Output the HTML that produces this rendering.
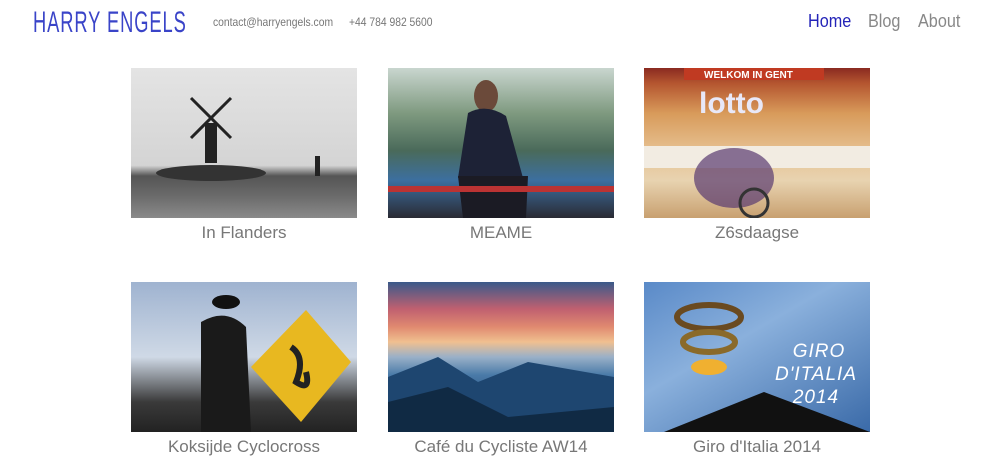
<!DOCTYPE html>
<html><head><meta charset="utf-8"><style>
*{margin:0;padding:0;box-sizing:border-box}
body{width:1000px;height:469px;background:#fff;font-family:"Liberation Sans",sans-serif;position:relative;overflow:hidden}
.t{position:absolute;left:33px;top:6px;font-size:30px;color:#3a44c8;letter-spacing:1.5px;transform:scaleX(0.61);transform-origin:left top;white-space:nowrap}
.c{position:absolute;top:15px;font-size:12px;color:#777;white-space:nowrap;transform:scaleX(0.86);transform-origin:left top}
.n{position:absolute;top:11px;font-size:18px;color:#888;transform:scaleX(0.9);transform-origin:left top}
.im{position:absolute;width:226px;height:150px;overflow:hidden}
.cap{position:absolute;width:226px;text-align:center;font-size:17px;color:#777}
</style></head><body>
<div class="t">HARRY ENGELS</div>
<div class="c" style="left:213px">contact@harryengels.com</div>
<div class="c" style="left:349px">+44 784 982 5600</div>
<div class="n" style="left:808px;color:#2424b8">Home</div>
<div class="n" style="left:868px">Blog</div>
<div class="n" style="left:918px">About</div>

<div class="im" style="left:131px;top:68px;background:linear-gradient(#e4e4e4 0%,#d4d4d4 65%,#555 72%,#6a6a6a 85%,#8a8a8a 100%)">
<svg width="226" height="150"><g stroke="#222" stroke-width="3"><line x1="60" y1="30" x2="100" y2="70"/><line x1="100" y1="30" x2="60" y2="70"/></g><rect x="74" y="55" width="12" height="40" fill="#222"/><ellipse cx="80" cy="105" rx="55" ry="8" fill="#333"/><rect x="184" y="88" width="5" height="20" fill="#222"/></svg></div>
<div class="cap" style="left:131px;top:223px">In Flanders</div>

<div class="im" style="left:388px;top:68px;background:linear-gradient(#c9d6cf 0%,#7f9a80 30%,#4a6a5a 55%,#3c6fa0 75%,#2a2a33 100%)">
<svg width="226" height="150"><ellipse cx="98" cy="28" rx="12" ry="16" fill="#6b4a3a"/><path d="M80 45 Q98 35 118 48 L135 110 L70 110 Z" fill="#1d2236"/><path d="M70 108 L140 108 L138 150 L75 150Z" fill="#1b1b24"/><rect x="0" y="118" width="226" height="6" fill="#b33"/></svg></div>
<div class="cap" style="left:388px;top:223px">MEAME</div>

<div class="im" style="left:644px;top:68px;background:linear-gradient(#8a2a20 0%,#b4552f 10%,#d89a5a 30%,#e6c090 55%,#e8d3b0 75%,#c8a070 100%)">
<svg width="226" height="150"><rect x="40" y="0" width="140" height="12" fill="#c03a22"/><text x="60" y="10" fill="#fff" font-size="10" font-family="Liberation Sans" font-weight="bold">WELKOM IN GENT</text><text x="55" y="45" fill="#e8e8f8" font-size="30" font-weight="bold" font-family="Liberation Sans">lotto</text><rect x="0" y="78" width="226" height="22" fill="#f2ece2"/><ellipse cx="90" cy="110" rx="40" ry="30" fill="#5a3a70" opacity=".7"/><circle cx="110" cy="135" r="14" fill="none" stroke="#333" stroke-width="3"/></svg></div>
<div class="cap" style="left:644px;top:223px">Z6sdaagse</div>

<div class="im" style="left:131px;top:282px;background:linear-gradient(#9fb3d0 0%,#cfd9e6 50%,#3a3a3a 80%,#222 100%)">
<svg width="226" height="150"><ellipse cx="95" cy="20" rx="14" ry="7" fill="#111"/><path d="M70 40 Q95 25 115 45 L120 150 L70 150Z" fill="#1a1a1a"/><path d="M175 28 L220 80 L170 140 L120 85Z" fill="#e8b820"/><path d="M160 65 Q175 75 165 100 Q180 110 175 90" stroke="#222" stroke-width="6" fill="none"/></svg></div>
<div class="cap" style="left:131px;top:437px">Koksijde Cyclocross</div>

<div class="im" style="left:388px;top:282px;background:linear-gradient(#3a5a8a 0%,#c06070 18%,#e08a70 30%,#f0c090 40%,#9ab0c8 50%,#4a7aa8 62%,#2a5580 80%,#15304a 100%)">
<svg width="226" height="150"><path d="M0 95 L50 75 L90 100 L140 80 L226 95 L226 150 L0 150Z" fill="#1e4670"/><path d="M0 120 L60 105 L120 135 L226 125 L226 150 L0 150Z" fill="#102a44"/></svg></div>
<div class="cap" style="left:388px;top:437px">Café du Cycliste AW14</div>

<div class="im" style="left:644px;top:282px;background:linear-gradient(150deg,#5a8ac8 0%,#8ab0dc 40%,#3a6aa8 100%)">
<svg width="226" height="150"><ellipse cx="65" cy="35" rx="32" ry="12" fill="none" stroke="#6a4a20" stroke-width="6"/><ellipse cx="65" cy="60" rx="26" ry="10" fill="none" stroke="#8a6a2a" stroke-width="6"/><ellipse cx="65" cy="85" rx="18" ry="8" fill="#f0b030"/><path d="M20 150 L120 110 L226 150Z" fill="#111"/><g fill="#fff" font-family="Liberation Sans" font-style="italic" font-size="19" text-anchor="middle" letter-spacing="1"><text x="175" y="75">GIRO</text><text x="172" y="98">D'ITALIA</text><text x="172" y="121">2014</text></g></svg></div>
<div class="cap" style="left:644px;top:437px">Giro d'Italia 2014</div>
</body></html>
